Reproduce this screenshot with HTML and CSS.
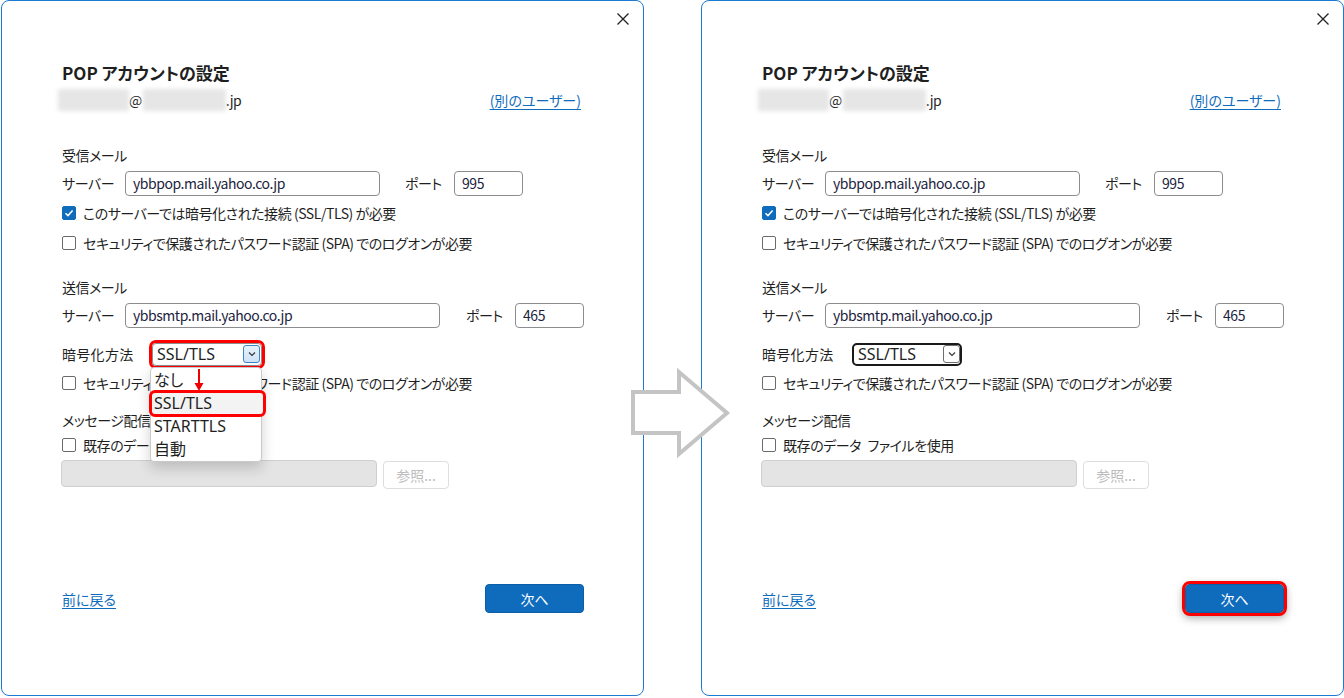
FILE: index.html
```html
<!DOCTYPE html>
<html lang="ja">
<head>
  <meta charset="UTF-8" />
  <title>POP アカウントの設定</title>
  <link rel="stylesheet" href="styles.css">
</head>
<body>
  <div class="stage">

    <!-- before: dropdown open -->
    <section class="dialog">
      <button class="close" aria-label="閉じる">
        <svg width="12" height="12" viewBox="0 0 12 12"><path d="M0.5 0.5 L11.5 11.5 M11.5 0.5 L0.5 11.5" stroke="#222" stroke-width="1.3" fill="none"/></svg>
      </button>
      <h1>POP アカウントの設定</h1>
      <div class="account">
        <span class="email"><span class="blur b1"></span>@<span class="blur b2"></span>.jp</span>
        <a href="#" class="link">(別のユーザー)</a>
      </div>

      <div class="section-title first">受信メール</div>
      <div class="server-row">
        <span class="lbl">サーバー</span>
        <input class="field host-in" value="ybbpop.mail.yahoo.co.jp" readonly>
        <span class="lbl port-lbl">ポート</span>
        <input class="field port" value="995" readonly>
      </div>
      <div class="check-row"><span class="check on"><svg width="10" height="10" viewBox="0 0 10 10"><path d="M1.5 5.2 L4 7.6 L8.6 2.6" stroke="#fff" stroke-width="1.5" fill="none"/></svg></span>このサーバーでは暗号化された接続 (SSL/TLS) が必要</div>
      <div class="check-row"><span class="check"></span>セキュリティで保護されたパスワード認証 (SPA) でのログオンが必要</div>

      <div class="section-title">送信メール</div>
      <div class="server-row">
        <span class="lbl">サーバー</span>
        <input class="field host-out" value="ybbsmtp.mail.yahoo.co.jp" readonly>
        <span class="lbl port-lbl wide">ポート</span>
        <input class="field port" value="465" readonly>
      </div>
      <div class="enc-row">
        <span class="lbl enc-lbl">暗号化方法</span>
        <div class="combo marked">
          <span class="combo-value">SSL/TLS</span>
          <span class="chev open"><svg width="8" height="6" viewBox="0 0 8 6"><path d="M1 1.5 L4 4.5 L7 1.5" stroke="#333" stroke-width="1.1" fill="none"/></svg></span>
          <ul class="menu">
            <li>なし</li>
            <li class="picked">SSL/TLS</li>
            <li>STARTTLS</li>
            <li>自動</li>
            <svg class="pointer" width="12" height="24" viewBox="0 0 12 24"><path d="M6 0 L6 15" stroke="#e00" stroke-width="2"/><path d="M1.5 14 L10.5 14 L6 22 Z" fill="#e00"/></svg>
          </ul>
        </div>
      </div>
      <div class="check-row"><span class="check"></span>セキュリティで保護されたパスワード認証 (SPA) でのログオンが必要</div>

      <div class="section-title msg">メッセージ配信</div>
      <div class="check-row"><span class="check"></span>既存のデータ&ensp;ファイルを使用</div>
      <div class="file-row">
        <div class="field disabled"></div>
        <button class="browse" disabled>参照...</button>
      </div>

      <div class="footer">
        <a href="#" class="link">前に戻る</a>
        <button class="next">次へ</button>
      </div>
    </section>

    <svg class="big-arrow" width="110" height="96" viewBox="0 0 110 96">
      <path d="M5 26 L51 26 L51 6 L99 47 L51 88 L51 67 L5 67 Z" fill="#fff" stroke="#c4c4c4" stroke-width="4" stroke-linejoin="miter"/>
    </svg>

    <!-- after: SSL/TLS chosen -->
    <section class="dialog">
      <button class="close" aria-label="閉じる">
        <svg width="12" height="12" viewBox="0 0 12 12"><path d="M0.5 0.5 L11.5 11.5 M11.5 0.5 L0.5 11.5" stroke="#222" stroke-width="1.3" fill="none"/></svg>
      </button>
      <h1>POP アカウントの設定</h1>
      <div class="account">
        <span class="email"><span class="blur b1"></span>@<span class="blur b2"></span>.jp</span>
        <a href="#" class="link">(別のユーザー)</a>
      </div>

      <div class="section-title first">受信メール</div>
      <div class="server-row">
        <span class="lbl">サーバー</span>
        <input class="field host-in" value="ybbpop.mail.yahoo.co.jp" readonly>
        <span class="lbl port-lbl">ポート</span>
        <input class="field port" value="995" readonly>
      </div>
      <div class="check-row"><span class="check on"><svg width="10" height="10" viewBox="0 0 10 10"><path d="M1.5 5.2 L4 7.6 L8.6 2.6" stroke="#fff" stroke-width="1.5" fill="none"/></svg></span>このサーバーでは暗号化された接続 (SSL/TLS) が必要</div>
      <div class="check-row"><span class="check"></span>セキュリティで保護されたパスワード認証 (SPA) でのログオンが必要</div>

      <div class="section-title">送信メール</div>
      <div class="server-row">
        <span class="lbl">サーバー</span>
        <input class="field host-out" value="ybbsmtp.mail.yahoo.co.jp" readonly>
        <span class="lbl port-lbl wide">ポート</span>
        <input class="field port" value="465" readonly>
      </div>
      <div class="enc-row">
        <span class="lbl enc-lbl">暗号化方法</span>
        <div class="combo focused">
          <span class="combo-value">SSL/TLS</span>
          <span class="chev"><svg width="8" height="6" viewBox="0 0 8 6"><path d="M1 1.5 L4 4.5 L7 1.5" stroke="#333" stroke-width="1.1" fill="none"/></svg></span>
        </div>
      </div>
      <div class="check-row"><span class="check"></span>セキュリティで保護されたパスワード認証 (SPA) でのログオンが必要</div>

      <div class="section-title msg">メッセージ配信</div>
      <div class="check-row"><span class="check"></span>既存のデータ&ensp;ファイルを使用</div>
      <div class="file-row">
        <div class="field disabled"></div>
        <button class="browse" disabled>参照...</button>
      </div>

      <div class="footer">
        <a href="#" class="link">前に戻る</a>
        <button class="next marked">次へ</button>
      </div>
    </section>

  </div>
</body>
</html>
```

FILE: styles.css
```css
:root {
  --blue: #0f6cbd;
  --frame: #1b7bd2;
  --text: #1f1f1f;
  --red: #ff0000;
}

* {
  margin: 0;
  padding: 0;
  box-sizing: border-box;
}

body {
  width: 1344px;
  height: 698px;
  overflow: hidden;
  background-color: #fff;
  color: var(--text);
  font-family: "Noto Sans CJK JP", "Noto Sans", sans-serif;
  font-size: 14px;
  line-height: 20px;
  letter-spacing: -0.45px;
  font-feature-settings: "palt";
}

.stage {
  position: relative;
  display: flex;
  gap: 57px;
  padding-left: 1px;
}

.dialog {
  position: relative;
  width: 643px;
  height: 696px;
  border: 1px solid var(--frame);
  border-radius: 8px;
  padding: 61px 59px 0 60px;
  display: flex;
  flex-direction: column;
  background-color: #fff;
}

.close {
  position: absolute;
  top: 12px;
  right: 14px;
  width: 12px;
  height: 12px;
  border: none;
  background: none;
  display: flex;
}

h1 {
  font-size: 17px;
  font-weight: 700;
  line-height: 22px;
  height: 22px;
  letter-spacing: 0;
}

.account {
  height: 32px;
  display: flex;
  align-items: center;
  justify-content: space-between;
  padding-right: 3px;
}

.email {
  display: flex;
  align-items: center;
}

.blur {
  display: inline-block;
  height: 22px;
  background-color: #e6e6e6;
  filter: blur(2px);
}

.blur.b1 {
  width: 71px;
  margin-left: -4px;
}

.blur.b2 {
  width: 83px;
  margin-left: 1px;
}

.link {
  color: var(--blue);
  text-decoration: underline;
  text-underline-offset: 3px;
  letter-spacing: 0;
}

.section-title {
  margin-top: 19px;
  height: 20px;
}

.section-title.first {
  margin-top: 29px;
}

.section-title.msg {
  margin-top: 12px;
}

.server-row {
  margin-top: 3px;
  height: 30px;
  display: flex;
  align-items: center;
}

.lbl {
  width: 63px;
  flex-shrink: 0;
}

.port-lbl {
  width: 49px;
  margin-left: 25px;
}

.port-lbl.wide {
  margin-left: 26px;
}

.field {
  height: 25px;
  border: 1px solid #8d8d8d;
  border-radius: 4px;
  padding: 0 7px;
  font-family: inherit;
  font-size: 14px;
  letter-spacing: -0.45px;
  color: #1c2340;
  background-color: #fff;
  outline: none;
  font-feature-settings: "palt";
}

.host-in { width: 255px; }
.host-out { width: 315px; }
.port { width: 69px; }

.check-row {
  height: 30px;
  display: flex;
  align-items: center;
  gap: 7px;
  white-space: nowrap;
}

.check {
  width: 14px;
  height: 14px;
  border: 1px solid #6b6b6b;
  border-radius: 2px;
  flex-shrink: 0;
  display: flex;
  align-items: center;
  justify-content: center;
}

.check.on {
  background-color: var(--blue);
  border-color: var(--blue);
}

.enc-row {
  margin-top: 10px;
  height: 28px;
  display: flex;
  align-items: center;
}

.enc-lbl {
  width: 90px;
  letter-spacing: 0.3px;
}

.combo {
  position: relative;
  width: 110px;
  height: 23px;
  border: 1px solid #8d8d8d;
  border-radius: 4px;
  display: flex;
  align-items: center;
  justify-content: space-between;
  padding: 0 1px 0 4px;
  z-index: 2;
  font-family: "Noto Sans", sans-serif;
  font-size: 16px;
  letter-spacing: 0;
}

.combo.marked {
  outline: 3px solid var(--red);
  outline-offset: 0;
  border-radius: 4px;
}

.combo.focused {
  border: 2px solid #1a1a1a;
  border-radius: 5px;
  padding: 0 0 0 4px;
}

.chev {
  width: 17px;
  height: 18px;
  border: 1px solid #6d6d6d;
  border-radius: 3px;
  display: flex;
  align-items: center;
  justify-content: center;
  background-color: #fff;
}

.chev.open {
  border-color: #3b86c9;
  background: linear-gradient(#e6f1fb, #cfe3f6);
}

.menu {
  position: absolute;
  left: -3px;
  top: 23px;
  width: 112px;
  height: 95px;
  list-style: none;
  background-color: #fff;
  border: 1px solid #c9c9c9;
  border-radius: 4px;
  box-shadow: 0 6px 14px rgba(0, 0, 0, 0.18);
  padding-top: 1px;
  font-family: "Noto Sans", "Noto Sans CJK JP", sans-serif;
}

.menu li {
  height: 23px;
  line-height: 23px;
  padding-left: 3px;
  font-size: 16px;
}

.menu li.picked {
  background-color: #f3f3f3;
  outline: 3px solid var(--red);
  outline-offset: -1px;
  border-radius: 4px;
  margin-right: -3px;
}

.pointer {
  position: absolute;
  left: 42px;
  top: 1px;
}

.file-row {
  height: 29px;
  display: flex;
  align-items: flex-start;
  gap: 6px;
  margin-left: -1px;
}

.field.disabled {
  width: 316px;
  height: 27px;
  background-color: #e4e4e4;
  border-color: #cfcfcf;
}

.browse {
  margin-top: 1px;
  width: 66px;
  height: 28px;
  background-color: #fff;
  border: 1px solid #dedede;
  border-radius: 4px;
  font-family: inherit;
  font-size: 14px;
  color: #bcbcbc;
}

.footer {
  margin-top: 95px;
  height: 29px;
  display: flex;
  align-items: center;
  justify-content: space-between;
}

.next {
  width: 99px;
  height: 29px;
  background-color: var(--blue);
  border: 1px solid #0c5ea6;
  border-radius: 4px;
  color: #fff;
  font-family: inherit;
  font-size: 14px;
}

.next.marked {
  outline: 3px solid var(--red);
  outline-offset: 0;
  border-radius: 5px;
  box-shadow: 0 3px 8px 2px rgba(0, 0, 0, 0.35);
}

.big-arrow {
  position: absolute;
  left: 628px;
  top: 366px;
  z-index: 3;
}
```
